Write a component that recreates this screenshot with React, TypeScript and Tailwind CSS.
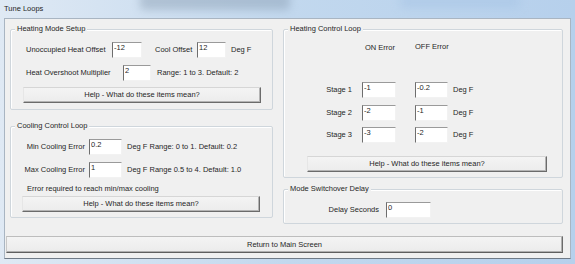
import React from "react";

const txt = "text-[#262626]";

const Field = ({ value, w }: { value: string; w: string }) => (
  <input
    readOnly
    value={value}
    className={`${w} h-[16px] shrink-0 bg-white border border-t-[#9a9a9a] border-l-[#6e6e6e] border-r-[#f2f2f2] border-b-[#f2f2f2] px-[1px] pb-[6px] text-[7.5px] text-[#262626] outline-none`}
  />
);

const Help = ({ className }: { className: string }) => (
  <button
    className={`${className} h-[16px] bg-gradient-to-b from-[#f4f4f4] to-[#ececec] border border-t-[#d6d6d6] border-l-[#e6e6e6] border-r-[#6b6b6b] border-b-[#6b6b6b] shadow-[inset_-1px_-1px_0_#b4b4b4] text-[7.5px] ${txt} leading-none`}
  >
    Help - What do these items mean?
  </button>
);

const Group = ({
  title,
  className,
  children,
}: {
  title: string;
  className: string;
  children: React.ReactNode;
}) => (
  <div
    className={`relative border border-[#cfd6dc] rounded-[2px] shadow-[inset_1px_1px_0_#ffffff] ${className}`}
  >
    <span
      className={`absolute -top-[6px] left-[4px] px-[2px] bg-[#f0f0f0] text-[7.5px] leading-[10px] ${txt}`}
    >
      {title}
    </span>
    {children}
  </div>
);

export default function App() {
  return (
    <div className={`relative w-[575px] h-[264px] overflow-hidden bg-gradient-to-r from-[#dfe9f4] via-[#c2d8ee] to-[#b6d0ec] font-['Liberation_Sans',Arial,sans-serif] ${txt} flex flex-col`}>
      {/* glass blur behind title bar */}
      <div className="absolute left-[140px] -top-[8px] w-[150px] h-[18px] bg-[#7f93a8] opacity-40 blur-[4px] rounded" />
      <div className="absolute left-[400px] -top-[6px] w-[120px] h-[14px] bg-[#a9c6e6] opacity-60 blur-[5px]" />

      <div className="relative h-[18px] px-[4px] flex items-center">
        <span className="text-[7.5px]">Tune Loops</span>
      </div>

      <div className="relative mx-[4px] h-[241px] bg-[#f0f0f0] border border-[#a9b5c2] border-b-[#6f7a86] flex flex-col">
        <div className="h-[217px] flex pl-[5px] pt-[10px] gap-[10px]">
          {/* left column */}
          <div className="w-[263px] flex flex-col">
            <Group title="Heating Mode Setup" className="h-[81px] flex flex-col">
              <div className="mt-[12px] flex items-center pl-[15px]">
                <span className="w-[86px] text-[7.5px]">Unoccupied Heat Offset</span>
                <Field value="-12" w="w-[30px]" />
                <span className="ml-[13px] w-[42px] text-[7.5px]">Cool Offset</span>
                <Field value="12" w="w-[29px]" />
                <span className="ml-[5px] text-[7.5px]">Deg F</span>
              </div>
              <div className="mt-[7px] flex items-center pl-[15px]">
                <span className="w-[97px] text-[7.5px]">Heat Overshoot Multiplier</span>
                <Field value="2" w="w-[28px]" />
                <span className="ml-[6px] text-[7.5px]">Range: 1 to 3.  Default: 2</span>
              </div>
              <Help className="mt-[6px] ml-[12px] w-[238px]" />
            </Group>

            <Group title="Cooling Control Loop" className="mt-[16px] h-[92px] flex flex-col">
              <div className="mt-[12px] flex items-center">
                <span className="w-[78px] pr-[4px] text-right text-[7.5px]">Min Cooling Error</span>
                <Field value="0.2" w="w-[33px]" />
                <span className="ml-[5px] text-[7.5px]">Deg F Range: 0 to 1.  Default: 0.2</span>
              </div>
              <div className="mt-[7px] flex items-center">
                <span className="w-[78px] pr-[4px] text-right text-[7.5px]">Max Cooling Error</span>
                <Field value="1" w="w-[33px]" />
                <span className="ml-[5px] text-[7.5px]">Deg F Range 0.5 to 4. Default: 1.0</span>
              </div>
              <div className="mt-[6px] pl-[16px] h-[10px] leading-[10px] text-[7.5px]">
                Error required to reach min/max cooling
              </div>
              <Help className="mt-[2px] ml-[11px] w-[238px]" />
            </Group>
          </div>

          {/* right column */}
          <div className="w-[280px] flex flex-col">
            <Group title="Heating Control Loop" className="h-[149px] flex flex-col">
              <div className="mt-[12px] h-[10px] flex items-center text-[7.5px]">
                <span className="ml-[81px] mt-[2px]">ON Error</span>
                <span className="ml-[20px]">OFF Error</span>
              </div>
              {[
                ["Stage 1", "-1", "-0.2", "mt-[30px]"],
                ["Stage 2", "-2", "-1", "mt-[7px]"],
                ["Stage 3", "-3", "-2", "mt-[6px]"],
              ].map(([label, on, off, mt]) => (
                <div key={label} className={`${mt} flex items-center`}>
                  <span className="w-[78px] pr-[10px] text-right text-[7.5px]">{label}</span>
                  <Field value={on} w="w-[34px]" />
                  <span className="w-[19px]" />
                  <Field value={off} w="w-[33px]" />
                  <span className="ml-[5px] text-[7.5px]">Deg F</span>
                </div>
              ))}
              <Help className="mt-[13px] ml-[23px] w-[240px]" />
            </Group>

            <Group title="Mode Switchover Delay" className="mt-[11px] h-[35px] flex flex-col">
              <div className="mt-[12px] flex items-center">
                <span className="w-[102px] pr-[7px] text-right text-[7.5px]">Delay Seconds</span>
                <Field value="0" w="w-[45px]" />
              </div>
            </Group>
          </div>
        </div>

        <button className="ml-[1px] w-[557px] h-[17px] bg-gradient-to-b from-[#f4f4f4] to-[#ebebeb] border border-t-[#bdbdbd] border-l-[#c8c8c8] border-r-[#6b6b6b] border-b-[#5f5f5f] shadow-[inset_-1px_-1px_0_#b0b0b0] text-[7.5px] text-[#262626] leading-none">
          Return to Main Screen
        </button>
      </div>
    </div>
  );
}
